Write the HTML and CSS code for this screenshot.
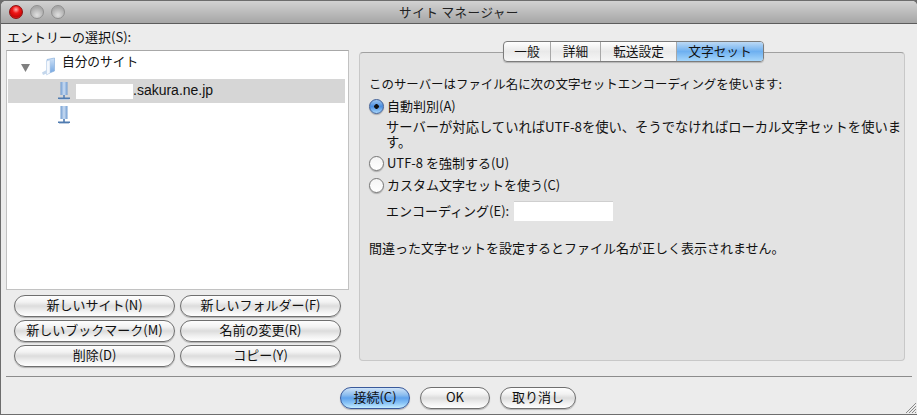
FILE: index.html
```html
<!DOCTYPE html>
<html lang="ja">
<head>
<meta charset="utf-8">
<title>サイト マネージャー</title>
<link rel="stylesheet" href="styles.css">
</head>
<body>
<div class="window">
  <header class="titlebar">
    <div class="lights">
      <span class="light close"></span>
      <span class="light"></span>
      <span class="light"></span>
    </div>
    <div class="title">サイト マネージャー</div>
  </header>
  <main class="content">
    <section class="left">
      <div class="entry-label">エントリーの選択(S):</div>
      <div class="tree">
        <div class="row root">
          <svg class="arrow" width="9" height="8" viewBox="0 0 9 8"><path d="M0 0h9L4.500 8z" fill="#808080"/></svg>
          <svg class="folder" width="15" height="19" viewBox="0 0 15 19">
            <defs><linearGradient id="fg" x1="0" y1="0" x2="0" y2="1"><stop offset="0" stop-color="#cfe2f7"/><stop offset="1" stop-color="#6fa3e0"/></linearGradient></defs>
            <path d="M6 2.500 13.500 1v13L6 17z" fill="url(#fg)" stroke="#8db2dc" stroke-width=".7"/>
            <path d="M5.500 4 9 3v13l-3.500 2z" fill="#f4f8fd" stroke="#b5cde8" stroke-width=".5"/>
            <path d="M1 15.500 5.500 13v3.500L2 18z" fill="#c4d7ec"/>
          </svg>
          <span class="root-name">自分のサイト</span>
        </div>
        <div class="row site selected">
          <svg class="server" width="12" height="19" viewBox="0 0 12 19"><use href="#srv"/></svg>
          <span class="mask"></span><span class="site-name">.sakura.ne.jp</span>
        </div>
        <div class="row site">
          <svg class="server" width="12" height="19" viewBox="0 0 12 19">
            <defs>
              <linearGradient id="sg" x1="0" y1="0" x2="1" y2="0"><stop offset="0" stop-color="#6f9bd0"/><stop offset=".5" stop-color="#c9dcf3"/><stop offset="1" stop-color="#6f9bd0"/></linearGradient>
              <g id="srv">
                <rect x="2.500" y="0" width="7" height="13" fill="url(#sg)"/>
                <rect x="5" y="13" width="2" height="3" fill="#7094c0"/>
                <rect x="0" y="15.500" width="12" height="1.500" fill="#4f7bb0"/>
                <rect x="1" y="17" width="10" height="1" fill="#bccde2"/>
              </g>
            </defs>
            <use href="#srv"/>
          </svg>
        </div>
      </div>
      <div class="actions">
        <button class="pill" type="button">新しいサイト(N)</button>
        <button class="pill" type="button">新しいフォルダー(F)</button>
        <button class="pill" type="button">新しいブックマーク(M)</button>
        <button class="pill" type="button">名前の変更(R)</button>
        <button class="pill" type="button">削除(D)</button>
        <button class="pill" type="button">コピー(Y)</button>
      </div>
    </section>
    <section class="right">
      <div class="panel">
        <div class="intro">このサーバーはファイル名に次の文字セットエンコーディングを使います:</div>
        <div class="option first"><span class="radio on"></span><span>自動判別(A)</span></div>
        <div class="desc">サーバーが対応していればUTF-8を使い、そうでなければローカル文字セットを使います。</div>
        <div class="option second"><span class="radio"></span><span>UTF-8 を強制する(U)</span></div>
        <div class="option third"><span class="radio"></span><span>カスタム文字セットを使う(C)</span></div>
        <div class="encoding"><span>エンコーディング(E):</span><span class="field"></span></div>
        <div class="warning">間違った文字セットを設定するとファイル名が正しく表示されません。</div>
      </div>
      <nav class="tabs">
        <span class="tab t1">一般</span>
        <span class="tab t2">詳細</span>
        <span class="tab t3">転送設定</span>
        <span class="tab t4 active">文字セット</span>
      </nav>
    </section>
  </main>
  <div class="divider"></div>
  <footer class="footer">
    <button class="pill default w70" type="button">接続(C)</button>
    <button class="pill w70" type="button">OK</button>
    <button class="pill w76" type="button">取り消し</button>
  </footer>
  <svg class="grip" width="12" height="12" viewBox="0 0 12 12"><path d="M11 1 1 11M11 4 4 11M11 7 7 11M11 10 10 11" stroke="#8a8a8a" stroke-width="1"/></svg>
</div>
</body>
</html>
```
FILE: styles.css
```css
* { box-sizing: border-box; }
html, body { margin: 0; padding: 0; }
body {
  width: 917px;
  height: 415px;
  overflow: hidden;
  background: #6d6d6d;
  font-family: "Noto Sans CJK JP", "Liberation Sans", sans-serif;
  font-size: 13px;
  color: #111;
}
.window {
  position: relative;
  width: 916px;
  height: 413px;
  margin: 1px 0 0 1px;
  background: #ececec;
  display: flex;
  flex-direction: column;
  border-radius: 5px 5px 0 0;
  overflow: hidden;
}
.titlebar {
  height: 23px;
  flex: none;
  display: flex;
  align-items: center;
  position: relative;
  background: linear-gradient(#d2d2d2, #a6a6a6);
  border-bottom: 1px solid #5c5c5c;
}
.lights { display: flex; gap: 7px; margin-left: 8px; }
.light {
  width: 14px;
  height: 14px;
  border-radius: 50%;
  border: 1px solid #8f8f8f;
  background: radial-gradient(circle at 50% 75%, #e0e0e0, #a9a9a9 70%);
}
.light.close {
  border-color: #8d1010;
  background: radial-gradient(circle at 50% 30%, #ffb0b0 0, #f01818 35%, #c80808 70%, #ff5a5a 100%);
}
.title {
  position: absolute;
  left: 0; right: 0; top: 0;
  line-height: 22px;
  text-align: center;
  font-size: 12.600px;
  color: #222;
  letter-spacing: .45px;
}
.content { flex: 1; display: flex; min-height: 0; }
.left { width: 358px; flex: none; padding-left: 5px; display: flex; flex-direction: column; }
.entry-label { height: 26px; padding: 4px 0 0 1px; line-height: 18px; font-size: 13px; }
.tree {
  width: 343px;
  height: 240px;
  background: #fff;
  border: 1px solid #c2c2c2;
  border-top-color: #a8a8a8;
  padding: 2px 3px 0 1px;
}
.row { display: flex; align-items: center; height: 24px; }
.root { height: 26px; padding-left: 13px; }
.arrow { margin-right: 11px; margin-top: 3px; }
.folder { margin-right: 6px; margin-top: 1px; }
.root-name { font-size: 12.700px; line-height: 18px; margin-top: -10px; }
.site { padding-left: 50px; }
.selected { background: #d6d6d6; }
.server { margin-top: 1px; }
.mask { width: 57px; height: 15px; background: #fff; margin-left: 6px; }
.site-name { font-family: "Liberation Sans", sans-serif; font-size: 14px; margin-top: -2px; }
.actions {
  display: grid;
  grid-template-columns: 161px 161px;
  grid-auto-rows: 22px;
  column-gap: 5px;
  row-gap: 3px;
  margin: 5px 0 0 8px;
}
.pill {
  font-family: inherit;
  font-size: 13px;
  color: #111;
  height: 22px;
  padding: 0 0 3px;
  line-height: 17px;
  border: 1px solid #6f6f6f;
  border-radius: 11px;
  background: linear-gradient(#fefefe 0, #f2f2f2 30%, #dcdcdc 50%, #f0f0f0 75%, #ffffff 100%);
  box-shadow: 0 1px 1px rgba(0,0,0,.25);
}
.right { flex: 1; position: relative; }
.panel {
  position: absolute;
  left: 0;
  top: 28px;
  width: 546px;
  height: 309px;
  background: #e3e3e3;
  border: 1px solid #c8c8c8;
  border-top-color: #a0a0a0;
  border-radius: 4px;
  padding: 22px 9px 0 9px;
  font-size: 13px;
}
.intro { line-height: 18px; font-size: 12.450px; }
.option { display: flex; align-items: center; line-height: 18px; gap: 3px; }
.option.first { margin-top: 4px; }
.option.second { margin-top: 5px; }
.option.third { margin-top: 4px; }
.radio {
  width: 15px;
  height: 15px;
  flex: none;
  border-radius: 50%;
  border: 1px solid #777;
  background: linear-gradient(#f4f4f4, #fff);
  box-shadow: 0 1px 1px rgba(0,0,0,.25);
}
.radio.on {
  border-color: #3f5f97;
  background: radial-gradient(circle at 50% 50%, #111 0, #111 2px, transparent 2.600px), linear-gradient(#9cc4ee, #4a8ee0 50%, #a8d6fa);
}
.desc { margin: 4px 0 0 17px; line-height: 15px; width: 520px; font-size: 13.300px; }
.encoding { display: flex; align-items: center; margin: 7px 0 0 17px; line-height: 20px; }
.field { width: 99px; height: 20px; margin-left: 5px; background: #fff; border-top: 1px solid #cfcfcf; }
.warning { margin-top: 18px; line-height: 18px; }
.tabs {
  position: absolute;
  left: 144px;
  top: 17px;
  width: 261px;
  height: 21px;
  display: flex;
  border: 1px solid #7c7c7c;
  border-radius: 4px;
  background: linear-gradient(#ffffff, #e9e9e9 50%, #f6f6f6);
  box-shadow: 0 1px 1px rgba(0,0,0,.2);
  overflow: hidden;
}
.tab {
  text-align: center;
  line-height: 18px;
  font-size: 12.700px;
  border-right: 1px solid #a8a8a8;
}
.t1 { width: 47px; }
.t2 { width: 50px; }
.t3 { width: 76px; }
.t4 { flex: 1; border-right: 0; }
.active { background: linear-gradient(#bcd9f5, #6eb0f0 50%, #a5d6fb); }
.divider { flex: none; height: 1px; margin: 0 5px; background: #8c8c8c; }
.footer {
  flex: none;
  height: 37px;
  display: flex;
  gap: 10px;
  padding: 10px 0 0 339px;
}
.w70 { width: 70px; }
.w76 { width: 76px; }
.default {
  border-color: #3a5a9b;
  background: linear-gradient(#cfe3f8 0, #8cbdee 35%, #5fa2ec 50%, #88c3f6 75%, #c4ecff 100%);
}
.grip { position: absolute; right: 0; bottom: 0; }
```
